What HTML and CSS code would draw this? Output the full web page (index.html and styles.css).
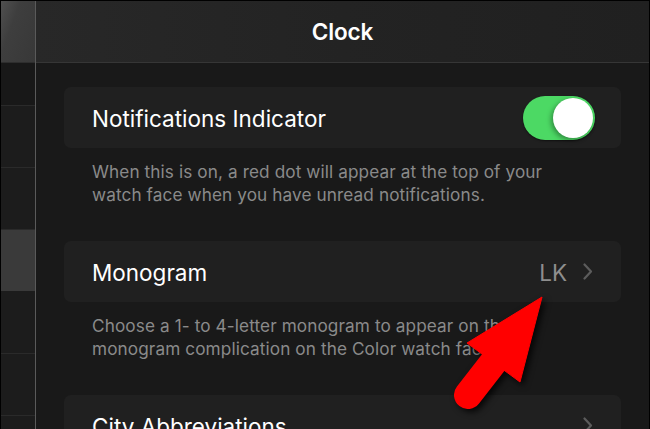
FILE: index.html
```html
<!DOCTYPE html>
<html>
<head>
<meta charset="utf-8">
<link rel="stylesheet" href="styles.css">
</head>
<body>
<div class="app">
  <aside class="sidebar">
    <div class="side-head"></div>
    <div class="side-row first"></div>
    <div class="side-row"></div>
    <div class="side-row"></div>
    <div class="side-row active"></div>
    <div class="side-row"></div>
    <div class="side-row"></div>
    <div class="side-row"></div>
  </aside>
  <main class="main">
    <header class="nav"><h1 class="title">Clock</h1></header>
    <div class="content">
      <div class="card">
        <span class="label">Notifications Indicator</span>
        <span class="toggle"><span class="knob"></span></span>
      </div>
      <p class="desc">When this is on, a red dot will appear at the top of your watch face when you have unread notifications.</p>
      <div class="card">
        <span class="label">Monogram</span>
        <span class="value">LK</span>
        <svg class="chev" width="10" height="17" viewBox="0 0 10 17"><path d="M1.5 1.5 L8 8.5 L1.5 15.5" fill="none" stroke="#5c5c5c" stroke-width="2.2" stroke-linecap="round" stroke-linejoin="round"/></svg>
      </div>
      <p class="desc">Choose a 1- to 4-letter monogram to appear on the monogram complication on the Color watch face.</p>
      <div class="card">
        <span class="label">City Abbreviations</span>
        <svg class="chev" width="10" height="17" viewBox="0 0 10 17"><path d="M1.5 1.5 L8 8.5 L1.5 15.5" fill="none" stroke="#5c5c5c" stroke-width="2.2" stroke-linecap="round" stroke-linejoin="round"/></svg>
      </div>
    </div>
  </main>
</div>
<svg class="arrow" width="650" height="429" viewBox="0 0 650 429">
  <g fill="#ff0000" stroke="#ff0000">
    <line x1="468" y1="395" x2="503" y2="350" stroke-width="28" stroke-linecap="round"/>
    <polygon points="542,297 467,343 520,382" stroke-width="1" stroke-linejoin="miter"/>
  </g>
</svg>
</body>
</html>
```
FILE: styles.css
```css
html, body {
  margin: 0;
  padding: 0;
  background: #000;
}
body {
  width: 650px;
  height: 429px;
  overflow: hidden;
  position: relative;
  font-family: Inter, "Noto Sans", sans-serif;
}
.app {
  margin: 1px 1px 0 1px;
  width: 648px;
  height: 428px;
  display: flex;
  overflow: hidden;
  background: #191919;
}
.sidebar {
  width: 34px;
  flex: none;
  border-right: 1px solid #5a5a5a;
  display: flex;
  flex-direction: column;
  background: #1c1c1c;
}
.side-head {
  height: 61px;
  flex: none;
  background: linear-gradient(110deg, #505050 0%, #3e3e3e 35%, #383838 100%);
  border-bottom: 1px solid #2e2e2e;
}
.side-row {
  height: 61px;
  flex: none;
  border-bottom: 1px solid #2a2a2a;
  background: #1c1c1c;
}
.side-row.first {
  height: 42px;
  background: #181818;
}
.side-row.active {
  background: #3a3a3a;
  border-bottom-color: #1c1c1c;
}
.main {
  flex: 1;
  display: flex;
  flex-direction: column;
  overflow: hidden;
}
.nav {
  height: 61px;
  flex: none;
  border-bottom: 1px solid #363636;
  background: linear-gradient(90deg, #282828 0%, #232323 50%, #202020 100%);
  display: flex;
  align-items: center;
  justify-content: center;
}
.title {
  margin: 0;
  color: #fff;
  font-size: 22.5px;
  font-weight: 600;
  letter-spacing: -0.1px;
}
.content {
  padding: 24px 28px 0 28px;
  display: flex;
  flex-direction: column;
}
.card {
  height: 61px;
  flex: none;
  background: #202020;
  border-radius: 7px;
  display: flex;
  align-items: center;
  padding: 0 28px;
}
.label {
  color: #fff;
  font-size: 22.5px;
  flex: 1;
  letter-spacing: 0;
  padding-top: 1px;
}
.toggle {
  width: 72px;
  height: 44px;
  border-radius: 22px;
  background: #4cd964;
  margin-right: -2px;
  position: relative;
  box-shadow: 0 1px 2px rgba(0,0,0,0.5);
}
.knob {
  position: absolute;
  right: 2px;
  top: 2px;
  width: 40px;
  height: 40px;
  border-radius: 50%;
  background: #fff;
  box-shadow: -2px 2px 5px rgba(0,0,0,0.35);
}
.value {
  color: #8e8e8e;
  font-size: 22.5px;
  margin-right: 16px;
  padding-top: 1px;
}
.chev {
  display: block;
}
.desc {
  margin: 0;
  padding: 13px 28px 35px 28px;
  color: #8a8a8a;
  font-size: 17.2px;
  letter-spacing: 0.1px;
  line-height: 22.5px;
}
.arrow {
  position: absolute;
  left: 0;
  top: 0;
  pointer-events: none;
  filter: drop-shadow(3px 3px 3px rgba(0,0,0,0.8));
}
```
